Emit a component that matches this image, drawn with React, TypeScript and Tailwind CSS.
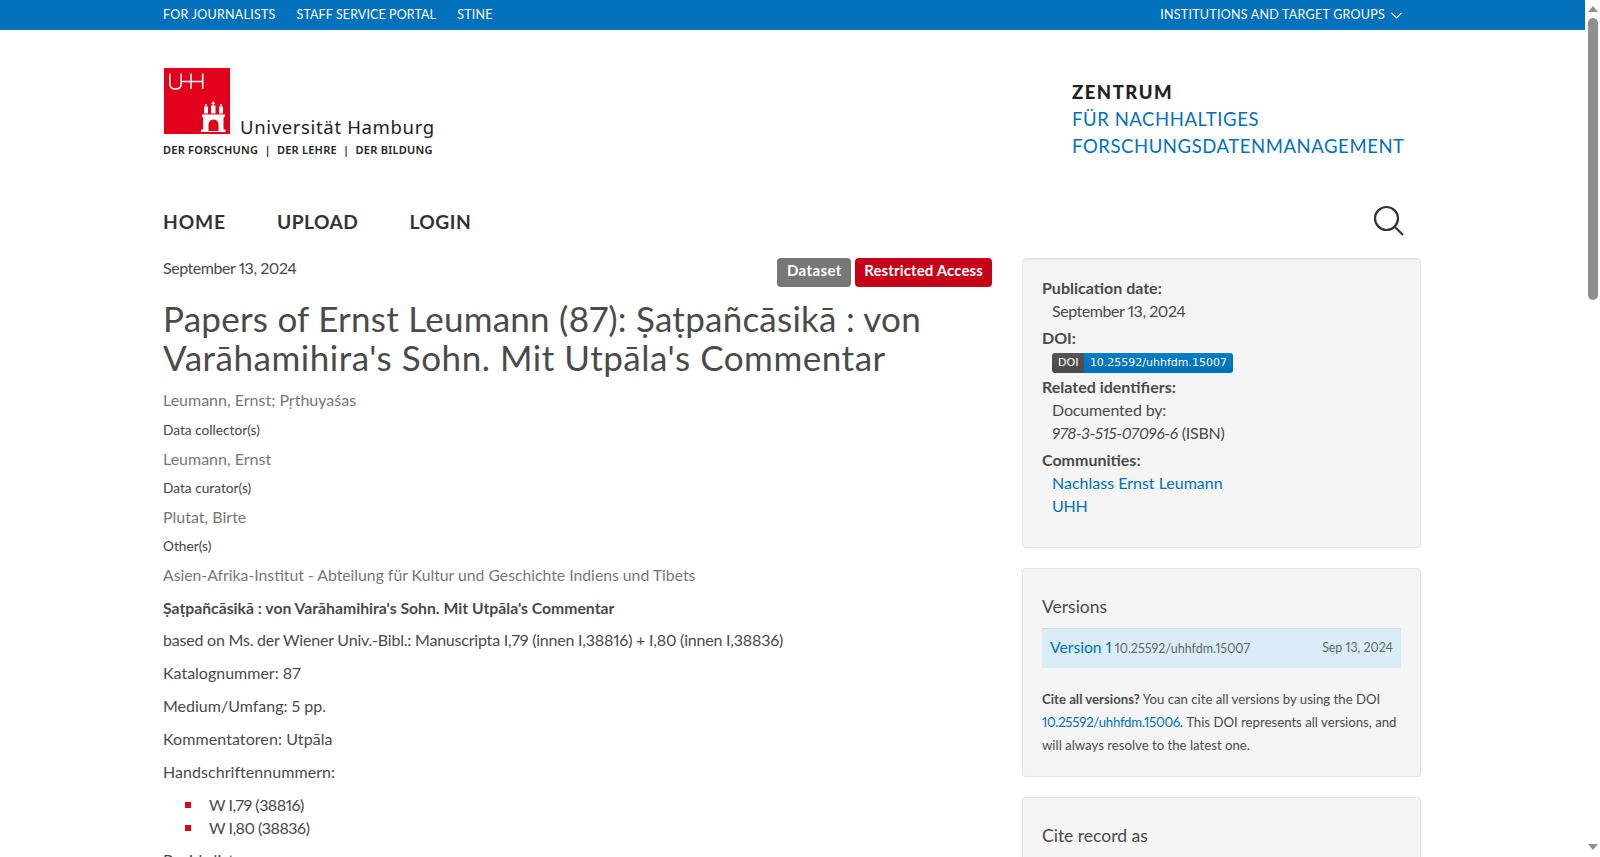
import React from "react";

const F = "font-['Lato','Noto_Sans',sans-serif]";

function Logo() {
  return (
    <div className="relative w-[272px] h-[92px]">
      <svg viewBox="0 0 272 92" className="w-[272px] h-[92px]">
        <rect x="0" y="0" width="66" height="66" fill="#e2001a" />
        <g stroke="#fff" strokeWidth="1.6" fill="none">
          <path d="M5.800 5.500v10q0 5.500 5.700 5.500t5.700 -5.500v-10" />
          <path d="M17.200 13.500h21.500M27 5.500v15.500M38.700 5.500v15.500" />
        </g>
        <g fill="#fff">
          <path d="M38 46.500h23v2l-1.500 1v12h2v2.500H37v-2.500h2v-12l-1 -1z" />
          <rect x="40" y="38.500" width="4" height="7" />
          <rect x="47" y="37.500" width="4.500" height="8" />
          <rect x="55" y="38.500" width="4" height="7" />
          <rect x="41.200" y="36" width="1.600" height="2" />
          <rect x="48.500" y="33.500" width="1.500" height="4" />
          <rect x="47.500" y="34.800" width="3.500" height="1.200" />
          <rect x="56.200" y="36" width="1.600" height="2" />
        </g>
        <path d="M44.500 63v-6.500a5 5 0 0 1 10 0v6.500z" fill="#e2001a" />
      </svg>
      <span className="absolute left-[76px] top-[47px] text-[18.500px] leading-[24px] tracking-[0.650px] text-[#222] font-['Noto_Sans',sans-serif] whitespace-nowrap">Universität Hamburg</span>
      <span className="absolute -left-[1px] top-[74px] text-[11px] leading-[16px] tracking-[0.240px] font-semibold text-[#222] font-['Noto_Sans',sans-serif] whitespace-nowrap">DER FORSCHUNG&nbsp; |&nbsp; DER LEHRE&nbsp; |&nbsp; DER BILDUNG</span>
    </div>
  );
}

function Meta({ label }: { label: string }) {
  return <div className="text-[13.700px] leading-[20px] text-[#444]">{label}</div>;
}

function Bullet({ text }: { text: string }) {
  return (
    <li className="flex items-center pl-[22px] tracking-[-0.500px]">
      <span className="w-[6px] h-[6px] bg-[#e2001a] mr-[18px]" />
      {text}
    </li>
  );
}

export default function App() {
  return (
    <div className={`${F} proportional-nums h-[857px] overflow-hidden flex bg-white text-[#4a4a4a]`}>
      <div className="flex-1 min-w-0">
        <div className="h-[30px] bg-[#0271bb] text-white text-[12.500px] tracking-[0.250px]">
          <div className="ml-[163px] mr-[183px] h-full flex items-center justify-between">
            <div className="flex gap-[21px]">
              <span>FOR JOURNALISTS</span>
              <span className="tracking-[0.100px]">STAFF SERVICE PORTAL</span>
              <span>STINE</span>
            </div>
            <div className="flex items-center gap-[6px]">
              <span>INSTITUTIONS AND TARGET GROUPS</span>
              <svg width="11" height="7" viewBox="0 0 11 7" fill="none" stroke="#fff" strokeWidth="1.200">
                <path d="M0.500 0.800l5 5 5-5" />
              </svg>
            </div>
          </div>
        </div>
        <div className="ml-[164px] mr-[164px] mt-[38px] flex justify-between h-[92px]">
          <Logo />
          <div className="w-[349px] pt-[10px] text-[18.500px] leading-[27px] tracking-[0.570px] text-[#0271bb]">
            <div className="font-black text-[#222] tracking-[1.500px] leading-[28px]">ZENTRUM</div>
            <div>FÜR NACHHALTIGES</div>
            <div>FORSCHUNGSDATENMANAGEMENT</div>
          </div>
        </div>
        <div className="ml-[163px] mr-[180px] mt-[37px] flex items-center justify-between h-[50px]">
          <div className="flex gap-[51px] text-[19.200px] font-bold text-[#333]">
            <span className="tracking-[0.900px]">HOME</span>
            <span className="tracking-[0.450px]">UPLOAD</span>
            <span className="tracking-[0.500px]">LOGIN</span>
          </div>
          <svg width="32" height="32" viewBox="0 0 32 32" fill="none" stroke="#333" strokeWidth="2.200" className="-translate-y-[1px]">
            <circle cx="13.500" cy="13.500" r="11.500" />
            <path d="M22 22l8 8" />
          </svg>
        </div>
        <div className="ml-[163px] mr-[164px] mt-[11px] flex gap-[30px]">
          <div className="w-[829px] shrink-0">
            <div className="flex justify-between items-start">
              <div className="text-[16px] leading-[22px] mt-[-1px] tracking-[-0.450px]">September 13, 2024</div>
              <div className="flex gap-[4px]">
                <span className="h-[29px] px-[9.500px] pb-[4px] rounded-[4px] bg-[#777] text-white text-[15px] tracking-[0.400px] font-bold flex items-center">Dataset</span>
                <span className="h-[29px] px-[9px] pb-[4px] rounded-[4px] bg-[#c40018] text-white text-[15px] tracking-[0.120px] font-bold flex items-center">Restricted Access</span>
              </div>
            </div>
            <h1 className="mt-[12px] text-[35px] leading-[39px] font-normal text-[#4a4a4a]">
              <span className="block tracking-[0.240px]">Papers of Ernst Leumann (87): Ṣaṭpañcāsikā : von</span>
              <span className="block tracking-[0.530px]">Varāhamihira's Sohn. Mit Utpāla's Commentar</span>
            </h1>
            <div className="mt-[12px] text-[#777] text-[16px] leading-[22px]">Leumann, Ernst; Pṛthuyaśas</div>
            <div className="mt-[9px]"><Meta label="Data collector(s)" /></div>
            <div className="mt-[8px] text-[#777] text-[16px] leading-[22px]">Leumann, Ernst</div>
            <div className="mt-[8px]"><Meta label="Data curator(s)" /></div>
            <div className="mt-[8px] text-[#777] text-[16px] leading-[22px]">Plutat, Birte</div>
            <div className="mt-[8px]"><Meta label="Other(s)" /></div>
            <div className="mt-[8px] text-[#777] text-[15.750px] leading-[22px]">Asien-Afrika-Institut - Abteilung für Kultur und Geschichte Indiens und Tibets</div>
            <div className="text-[16px] leading-[23px]">
              <p className="mt-[10px] font-bold text-[15.750px]">Ṣaṭpañcāsikā : von Varāhamihira's Sohn. Mit Utpāla's Commentar</p>
              <p className="mt-[9px] tracking-[-0.210px]">based on Ms. der Wiener Univ.-Bibl.: Manuscripta I,79 (innen I,38816) + I,80 (innen I,38836)</p>
              <p className="mt-[10px]">Katalognummer: 87</p>
              <p className="mt-[10px]">Medium/Umfang: 5 pp.</p>
              <p className="mt-[10px] tracking-[0.080px]">Kommentatoren: Utpāla</p>
              <p className="mt-[10px] tracking-[0.050px]">Handschriftennummern:</p>
              <ul className="mt-[11px] leading-[22.500px]">
                <Bullet text="W I,79 (38816)" />
                <Bullet text="W I,80 (38836)" />
              </ul>
              <p className="mt-[9px]">Bezirksliste:</p>
            </div>
          </div>
          <div className="flex-1 min-w-0 text-[16px] leading-[23px]">
            <div className="h-[290px] rounded-[4px] border border-[#e3e3e3] bg-[#f5f5f5] pt-[17px] px-[19px] shadow-[inset_0_1px_1px_rgba(0,0,0,0.05)]">
              <div className="font-bold">Publication date:</div>
              <div className="pl-[10px] tracking-[-0.450px]">September 13, 2024</div>
              <div className="font-bold mt-[4px]">DOI:</div>
              <div className="pl-[10px] h-[20px] flex items-center mt-[4px]">
                <span className="flex rounded-[3px] overflow-hidden text-[11px] leading-[20px] text-white font-['DejaVu_Sans',sans-serif]">
                  <span className="bg-linear-to-b from-[#555] to-[#4a4a4a] px-[6px]">DOI</span>
                  <span className="bg-linear-to-b from-[#007ec6] to-[#0071b3] pl-[5.500px] pr-[5.500px]">10.25592/uhhfdm.15007</span>
                </span>
              </div>
              <div className="font-bold mt-[2px]">Related identifiers:</div>
              <div className="pl-[10px] tracking-[-0.150px]">Documented by:</div>
              <div className="pl-[10px] tracking-[-0.250px]"><i>978-3-515-07096-6</i> (ISBN)</div>
              <div className="font-bold mt-[4px]">Communities:</div>
              <div className="pl-[10px] text-[#0271bb]">Nachlass Ernst Leumann</div>
              <div className="pl-[10px] text-[#0271bb] tracking-[-0.300px]">UHH</div>
            </div>
            <div className="mt-[20px] h-[209px] rounded-[4px] border border-[#e3e3e3] bg-[#f5f5f5] pt-[26px] px-[19px]">
              <div className="text-[17.500px] leading-[24px]">Versions</div>
              <div className="mt-[9px] h-[40px] bg-[#d9edf7] border-t border-[#d5dde2] flex items-center justify-between px-[8px]">
                <div className="flex items-baseline gap-[3px] -translate-y-[1px]">
                  <span className="text-[#0271bb] text-[15.700px]">Version 1</span>
                  <span className="text-[12.500px] text-[#666]">10.25592/uhhfdm.15007</span>
                </div>
                <span className="text-[12.400px] text-[#666] -translate-y-[1px]">Sep 13, 2024</span>
              </div>
              <p className="mt-[20px] text-[13.200px] leading-[23px] whitespace-nowrap">
                <b>Cite all versions?</b> You can cite all versions by using the DOI<br />
                <span className="text-[#0271bb] tracking-[-0.250px]">10.25592/uhhfdm.15006</span>. This DOI represents all versions, and<br />
                will always resolve to the latest one.
              </p>
            </div>
            <div className="mt-[20px] h-[200px] rounded-[4px] border border-[#e3e3e3] bg-[#f5f5f5] pt-[26px] px-[19px]">
              <div className="text-[17.500px] leading-[24px]">Cite record as</div>
            </div>
          </div>
        </div>
      </div>
      <div className="w-[15px] shrink-0 bg-white flex flex-col items-center pt-[6px] pb-[7px]">
        <div className="w-0 h-0 border-l-[5px] border-r-[5px] border-b-[6px] border-l-transparent border-r-transparent border-b-[#8f8f8f]" />
        <div className="w-[10px] h-[282px] mt-[6px] rounded-[5px] bg-[#8f8f8f]" />
        <div className="flex-1" />
        <div className="w-0 h-0 border-l-[5px] border-r-[5px] border-t-[6px] border-l-transparent border-r-transparent border-t-[#8f8f8f]" />
      </div>
    </div>
  );
}
